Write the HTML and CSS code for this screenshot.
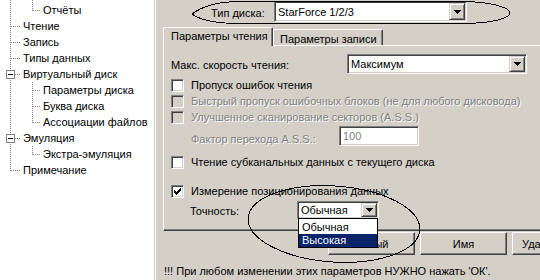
FILE: index.html
```html
<!DOCTYPE html>
<html lang="ru">
<head>
    <meta charset="UTF-8">
    <title>Параметры диска</title>
    <link rel="stylesheet" href="styles.css">
</head>
<body>
    <div class="window">
        <div class="tree">
            <div class="node"><span class="g pass"></span><span class="g g2 end"></span><span class="label">Отчёты</span></div>
            <div class="node"><span class="g tee"></span><span class="label">Чтение</span></div>
            <div class="node"><span class="g tee"></span><span class="label">Запись</span></div>
            <div class="node"><span class="g tee"></span><span class="label">Типы данных</span></div>
            <div class="node"><span class="g tee"><span class="toggle"><span class="minus"></span></span></span><span class="label">Виртуальный диск</span></div>
            <div class="node"><span class="g pass"></span><span class="g g2 tee"></span><span class="label">Параметры диска</span></div>
            <div class="node"><span class="g pass"></span><span class="g g2 tee"></span><span class="label">Буква диска</span></div>
            <div class="node"><span class="g pass"></span><span class="g g2 end"></span><span class="label">Ассоциации файлов</span></div>
            <div class="node"><span class="g tee"><span class="toggle"><span class="minus"></span></span></span><span class="label">Эмуляция</span></div>
            <div class="node"><span class="g pass"></span><span class="g g2 end"></span><span class="label">Экстра-эмуляция</span></div>
            <div class="node"><span class="g end"></span><span class="label">Примечание</span></div>
        </div>

        <div class="main">
            <div class="disk-row">
                <span class="disk-label">Тип диска:</span>
                <div class="combo combo-disk">
                    <span class="combo-value">StarForce 1/2/3</span>
                    <span class="combo-btn"><svg width="7" height="4" viewBox="0 0 7 4"><path d="M0 0h7v1h-1v1h-1v1h-1v1h-1v-1h-1v-1h-1v-1h-1z"/></svg></span>
                </div>
            </div>

            <div class="tabs">
                <div class="tab active">Параметры чтения</div>
                <div class="tab">Параметры записи</div>
            </div>

            <div class="tab-page">
                <div class="field speed-row">
                    <span class="field-label speed-label">Макс. скорость чтения:</span>
                    <div class="combo combo-speed">
                        <span class="combo-value">Максимум</span>
                        <span class="combo-btn"><svg width="7" height="4" viewBox="0 0 7 4"><path d="M0 0h7v1h-1v1h-1v1h-1v1h-1v-1h-1v-1h-1v-1h-1z"/></svg></span>
                    </div>
                </div>

                <div class="check first"><span class="box"></span>Пропуск ошибок чтения</div>
                <div class="check disabled"><span class="box"></span>Быстрый пропуск ошибочных блоков (не для любого дисковода)</div>
                <div class="check disabled"><span class="box"></span>Улучшенное сканирование секторов (A.S.S.)</div>

                <div class="field factor-row disabled">
                    <span class="field-label factor-label">Фактор перехода A.S.S.:</span>
                    <span class="edit">100</span>
                </div>

                <div class="check subchannel"><span class="box"></span>Чтение субканальных данных с текущего диска</div>
                <div class="check measure"><span class="box"><svg width="11" height="11" viewBox="0 0 11 11"><path d="M2 4h1v3H2zM3 5h1v3H3zM4 6h1v3H4zM5 5h1v3H5zM6 4h1v3H6zM7 3h1v3H7zM8 2h1v3H8z"/></svg></span>Измерение позиционирования данных</div>

                <div class="field accuracy-row">
                    <span class="field-label accuracy-label">Точность:</span>
                    <div class="combo combo-acc">
                        <span class="combo-value">Обычная</span>
                        <span class="combo-btn"><svg width="7" height="4" viewBox="0 0 7 4"><path d="M0 0h7v1h-1v1h-1v1h-1v1h-1v-1h-1v-1h-1v-1h-1z"/></svg></span>
                        <ul class="dropdown">
                            <li>Обычная</li>
                            <li class="selected">Высокая</li>
                        </ul>
                    </div>
                </div>
            </div>

            <div class="buttons">
                <button class="btn">Новый</button>
                <button class="btn">Имя</button>
                <button class="btn btn-last">Удалить</button>
            </div>

            <p class="note">!!! При любом изменении этих параметров НУЖНО нажать 'ОК'.</p>
        </div>

        <!-- пометки карандашом поверх скриншота -->
        <svg class="marks" width="540" height="280" viewBox="0 0 540 280" shape-rendering="crispEdges">
            <path d="M192 14 C200 8 214 1.5 240 1.5 H462 C492 1.5 510 8 510 13 C510 18 492 23.5 462 23.5 H240 C214 23.5 200 20 192 14 Z" fill="none" stroke="#000"/>
            <ellipse cx="334" cy="224" rx="86" ry="38" transform="rotate(4 334 224)" fill="none" stroke="#000"/>
        </svg>
    </div>
</body>
</html>
```

FILE: styles.css
```css
body {
    margin: 0;
    font-family: "Liberation Sans", Arial, sans-serif;
    font-size: 11px;
    color: #000;
    background-color: #d4d0c8;
}
.window {
    position: relative;
    display: flex;
    width: 540px;
    height: 280px;
    overflow: hidden;
    background-color: #d4d0c8;
}

/* дерево слева */
.tree {
    --v: repeating-linear-gradient(#808080 0 1px, transparent 1px 2px);
    --h: repeating-linear-gradient(90deg, #808080 0 1px, transparent 1px 2px);
    flex: none;
    width: 154px;
    padding-top: 2px;
    background: var(--v) 10px 0 / 1px 2px no-repeat, var(--v) 32px 0 / 1px 2px no-repeat, #fff;
    border-right: 1px solid #d4d0c8;
    box-shadow: 1px 0 0 #fff;
}
.node {
    display: flex;
    height: 16px;
    line-height: 16px;
    white-space: nowrap;
}
.g {
    --x: 10px;
    --w: 10px;
    flex: none;
    width: 21px;
    height: 16px;
}
.g2 {
    --x: 11px;
    --w: 8px;
    width: 20px;
}
.pass {
    background: var(--v) var(--x) 0 / 1px 100% no-repeat;
}
.tee {
    background: var(--v) var(--x) 0 / 1px 100% no-repeat,
                var(--h) calc(var(--x) + 1px) 8px / var(--w) 1px no-repeat;
}
.end {
    background: var(--v) var(--x) 0 / 1px 9px no-repeat,
                var(--h) calc(var(--x) + 1px) 8px / var(--w) 1px no-repeat;
}
.toggle {
    display: flex;
    align-items: center;
    justify-content: center;
    width: 9px;
    height: 9px;
    margin: 4px 0 0 6px;
    box-sizing: border-box;
    border: 1px solid #808080;
    background-color: #fff;
}
.minus {
    width: 5px;
    height: 1px;
    background-color: #000;
}
.label {
    margin-left: 2px;
}

/* правая часть */
.main {
    flex: 1;
    display: flex;
    flex-direction: column;
    padding-left: 8px;
    min-width: 0;
}
.disk-row {
    display: flex;
    align-items: center;
    height: 21px;
    margin-top: 1px;
}
.disk-label {
    width: 63px;
    margin-left: 48px;
    padding-top: 2px;
}

.combo {
    position: relative;
    display: flex;
    align-items: center;
    box-sizing: border-box;
    padding: 1px 1px 1px 3px;
    background-color: #fff;
    border: 1px solid;
    border-color: #808080 #fff #fff #808080;
    box-shadow: inset 1px 1px #404040, inset -1px -1px #d4d0c8;
    white-space: nowrap;
}
.combo-value {
    flex: 1;
}
.combo-btn {
    display: flex;
    align-items: center;
    justify-content: center;
    align-self: stretch;
    width: 16px;
    box-sizing: border-box;
    background-color: #d4d0c8;
    border: 1px solid;
    border-color: #d4d0c8 #404040 #404040 #d4d0c8;
    box-shadow: inset 1px 1px #fff, inset -1px -1px #808080;
}
.combo-disk {
    width: 193px;
    height: 21px;
}
.combo-speed {
    width: 180px;
    height: 20px;
}
.combo-acc {
    width: 82px;
    height: 18px;
}

.tabs {
    display: flex;
    align-items: flex-end;
    height: 18px;
    margin-top: 5px;
}
.tab {
    width: 110px;
    height: 16px;
    box-sizing: border-box;
    padding: 3px 0 0 6px;
    border: 1px solid #fff;
    border-right-color: #404040;
    border-bottom: 0;
    border-radius: 2px 2px 0 0;
    box-shadow: inset -1px 0 #808080;
    white-space: nowrap;
}
.tab.active {
    position: relative;
    z-index: 1;
    height: 19px;
    margin-bottom: -1px;
    padding: 2px 0 0 7px;
    background-color: #d4d0c8;
}

.tab-page {
    width: 390px;
    height: 186px;
    box-sizing: border-box;
    padding-left: 7px;
    border-top: 1px solid #fff;
    border-left: 1px solid #fff;
    border-bottom: 1px solid #404040;
    box-shadow: inset 0 -1px #808080;
    white-space: nowrap;
}
.field {
    display: flex;
    align-items: center;
}
.field-label {
    flex: none;
    padding-top: 1px;
}
.speed-row {
    height: 20px;
    margin-top: 8px;
}
.speed-label {
    width: 176px;
}
.factor-row {
    height: 20px;
    margin-top: 1px;
    padding-left: 20px;
}
.factor-label {
    width: 148px;
    padding-top: 5px;
}
.edit {
    display: flex;
    align-items: center;
    width: 80px;
    height: 20px;
    box-sizing: border-box;
    padding-left: 3px;
    background-color: #fff;
    border: 1px solid;
    border-color: #808080 #fff #fff #808080;
    box-shadow: inset 1px 1px #404040, inset -1px -1px #d4d0c8;
    color: #808080;
    text-shadow: none;
}
.accuracy-row {
    height: 18px;
    margin-top: 2px;
    padding-left: 19px;
}
.accuracy-label {
    width: 107px;
    padding-top: 2px;
}

.check {
    display: flex;
    align-items: center;
    height: 16px;
}
.check.first {
    margin-top: 3px;
}
.check.subchannel {
    margin-top: 8px;
}
.check.measure {
    margin-top: 13px;
}
.box {
    flex: none;
    display: flex;
    width: 13px;
    height: 13px;
    box-sizing: border-box;
    margin-right: 7px;
    background-color: #fff;
    border: 1px solid;
    border-color: #808080 #fff #fff #808080;
    box-shadow: inset 1px 1px #404040, inset -1px -1px #d4d0c8;
}
.disabled {
    color: #808080;
    text-shadow: 1px 1px 0 #fff;
}
.check.disabled .box {
    background-color: #d4d0c8;
}

.dropdown {
    position: absolute;
    z-index: 5;
    top: 100%;
    left: 0;
    width: 100%;
    box-sizing: border-box;
    margin: 0;
    padding: 2px 0 0;
    list-style: none;
    background-color: #fff;
    border: 1px solid #000;
}
.dropdown li {
    height: 13px;
    line-height: 13px;
    padding-left: 3px;
}
.dropdown li.selected {
    background-color: #0a246a;
    color: #fff;
}

.buttons {
    display: flex;
    gap: 5px;
    margin: 1px 0 0 165px;
}
.btn {
    flex: none;
    width: 87px;
    height: 23px;
    padding: 0;
    font: inherit;
    color: #000;
    background-color: #d4d0c8;
    border: 1px solid;
    border-color: #fff #404040 #404040 #fff;
    box-shadow: inset -1px -1px #808080;
}
.btn-last {
    width: 62px;
}
.note {
    margin: 10px 0 0 1px;
    line-height: 13px;
    white-space: nowrap;
}

.marks {
    position: absolute;
    z-index: 10;
    top: 0;
    left: 0;
    pointer-events: none;
}
```
